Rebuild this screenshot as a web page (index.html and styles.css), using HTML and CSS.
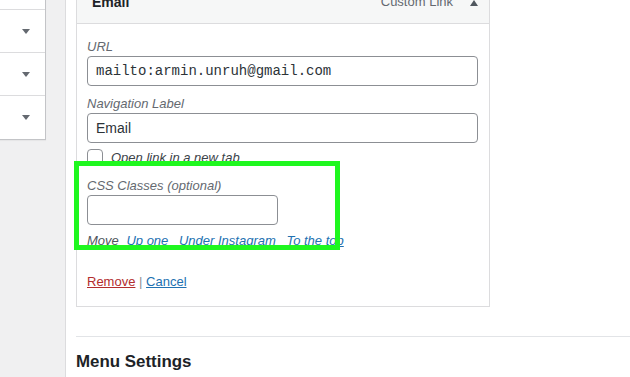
FILE: index.html
```html
<!DOCTYPE html>
<html lang="en">
<head>
<meta charset="utf-8">
<title>Menus</title>
<link rel="stylesheet" href="styles.css">
</head>
<body>
<div class="page">
  <aside class="accordion">
    <div class="acc-row"></div>
    <div class="acc-row"><svg class="acc-arrow" width="8" height="5" viewBox="0 0 8 5"><path d="M0 0H8L4 5Z"/></svg></div>
    <div class="acc-row"><svg class="acc-arrow" width="8" height="5" viewBox="0 0 8 5"><path d="M0 0H8L4 5Z"/></svg></div>
    <div class="acc-row"><svg class="acc-arrow" width="8" height="5" viewBox="0 0 8 5"><path d="M0 0H8L4 5Z"/></svg></div>
  </aside>
  <main class="edit">
    <div class="card">
      <div class="card-head">
        <span class="item-title">Email</span>
        <span class="item-controls">
          <span class="item-type">Custom Link</span>
          <svg class="item-toggle" width="8" height="6" viewBox="0 0 8 6"><path d="M0 6H8L4 0Z"/></svg>
        </span>
      </div>
      <div class="card-body">
        <label class="field-label">URL</label>
        <input class="text-input mono" type="text" value="mailto:armin.unruh@gmail.com">
        <label class="field-label gap-top">Navigation Label</label>
        <input class="text-input" type="text" value="Email">
        <div class="check-row">
          <input class="check" type="checkbox">
          <span class="check-label">Open link in a new tab</span>
        </div>
        <label class="field-label css-label">CSS Classes (optional)</label>
        <input class="text-input short" type="text" value="">
        <div class="move-row">Move <a href="#" class="move-link">Up one</a> <a href="#" class="move-link">Under Instagram</a> <a href="#" class="move-link">To the top</a></div>
        <div class="actions"><a href="#" class="remove">Remove</a> <span class="sep">|</span> <a href="#" class="cancel">Cancel</a></div>
        <div class="highlight"></div>
      </div>
    </div>
    <section class="settings">
      <h3 class="settings-title">Menu Settings</h3>
    </section>
  </main>
</div>
</body>
</html>
```
FILE: styles.css
```css
* { box-sizing: border-box; }
html, body { margin: 0; padding: 0; }
body {
  background: #f0f0f1;
  font-family: "Liberation Sans", Arial, sans-serif;
  font-size: 13px;
  color: #3c434a;
  overflow: hidden;
}
.page {
  display: flex;
  align-items: flex-start;
  min-height: 100vh;
}
.accordion {
  width: 46px;
  flex: none;
  margin-top: -33px;
  margin-right: 19px;
  background: #fff;
  border-right: 1px solid #c3c4c7;
  border-bottom: 1px solid #c3c4c7;
  box-shadow: 0 1px 1px rgba(0,0,0,.04);
}
.acc-row {
  height: 43px;
  display: flex;
  align-items: center;
  justify-content: flex-end;
  padding-right: 15px;
  border-bottom: 1px solid #dcdcde;
}
.acc-row:last-child { border-bottom: none; height: 43px; }
.acc-arrow { fill: #646970; }
.edit {
  flex: 1;
  align-self: stretch;
  min-height: 100vh;
  background: #fff;
  border-left: 1px solid #dcdcde;
  padding-left: 10px;
}
.card {
  width: 414px;
  margin-top: -21px;
  border: 1px solid #dcdcde;
  background: #fff;
}
.card-head {
  height: 44px;
  background: #f6f7f7;
  border-bottom: 1px solid #dcdcde;
  display: flex;
  align-items: center;
  justify-content: space-between;
  padding: 0 11px 0 15px;
}
.item-title {
  font-size: 14px;
  font-weight: bold;
  color: #1d2327;
}
.item-controls {
  display: flex;
  align-items: center;
  gap: 17px;
}
.item-type { color: #646970; font-size: 13px; }
.item-toggle { fill: #50575e; margin-top: 2px; }
.card-body {
  position: relative;
  padding: 15px 11px 16px 10px;
}
.field-label {
  display: block;
  font-style: italic;
  color: #646970;
  line-height: 16px;
  margin-bottom: 1px;
}
.gap-top { margin-top: 10px; }
.text-input {
  display: block;
  width: 100%;
  height: 30px;
  margin: 0;
  padding: 0 8px;
  border: 1px solid #8c8f94;
  border-radius: 4px;
  background: #fff;
  color: #2c3338;
  font-family: "Liberation Sans", Arial, sans-serif;
  font-size: 14px;
  outline: none;
}
.text-input.mono { font-family: "Liberation Mono", "Courier New", monospace; }
.text-input.short { width: 191px; }
.check-row {
  display: flex;
  align-items: center;
  gap: 8px;
  margin-top: 6px;
  height: 16px;
}
.check {
  appearance: none;
  -webkit-appearance: none;
  width: 16px;
  height: 16px;
  margin: 0;
  border: 1px solid #8c8f94;
  border-radius: 4px;
  background: #fff;
}
.check-label { font-style: italic; color: #3c434a; }
.css-label { margin-top: 13px; }
.move-row {
  margin-top: 8px;
  line-height: 16px;
  font-style: italic;
  color: #50575e;
}
.move-link {
  color: #2271b1;
  margin: 0 3px 0 4px;
}
.actions {
  margin-top: 25px;
  line-height: 16px;
}
.remove { color: #b32d2e; }
.cancel { color: #2271b1; }
.sep { color: #8c8f94; }
.highlight {
  position: absolute;
  left: -3px;
  top: 137px;
  width: 266px;
  height: 89px;
  border: 5px solid #1ff71f;
  pointer-events: none;
}
.settings {
  margin-top: 29px;
  border-top: 1px solid #e2e4e7;
}
.settings-title {
  margin: 13px 0 0;
  font-size: 16.9px;
  line-height: 24px;
  font-weight: bold;
  color: #1d2327;
}
```
